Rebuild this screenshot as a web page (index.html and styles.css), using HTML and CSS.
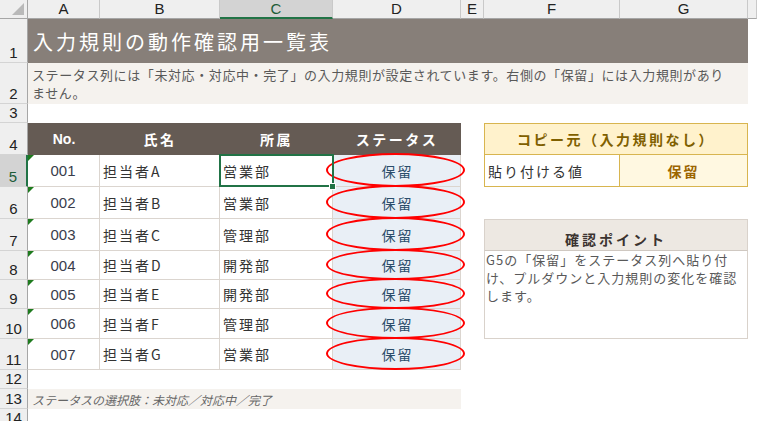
FILE: index.html
```html
<!DOCTYPE html>
<html>
    <head>
        <meta http-equiv="Content-Type" content="text/html; charset=utf-8"/>
        <link rel="stylesheet" href="styles.css">
    </head>
    <body>
        <div class='sheet'>
            <!-- column headers -->
            <div class='corner'><span class='corner_tri'></span></div>
            <div class='col_head'>A</div>
            <div class='col_head'>B</div>
            <div class='col_head col_head_sel'>C</div>
            <div class='col_head'>D</div>
            <div class='col_head'>E</div>
            <div class='col_head'>F</div>
            <div class='col_head'>G</div>
            <div class='col_head'></div>

            <!-- row 1 -->
            <div class='row_head'>1</div>
            <div class='title span7'>入力規則の動作確認用一覧表</div>
            <div class='blank'></div>

            <!-- row 2 -->
            <div class='row_head'>2</div>
            <div class='note span7'>ステータス列には「未対応・対応中・完了」の入力規則が設定されています。右側の「保留」には入力規則があり<br>ません。</div>
            <div class='blank'></div>

            <!-- row 3 -->
            <div class='row_head'>3</div>
            <div class='blank span8'></div>

            <!-- row 4 -->
            <div class='row_head'>4</div>
            <div class='th th_no'>No.</div>
            <div class='th'>氏名</div>
            <div class='th'>所属</div>
            <div class='th'>ステータス</div>
            <div class='blank'></div>
            <div class='copy_head span2'>コピー元（入力規則なし）</div>
            <div class='blank'></div>

            <!-- row 5 -->
            <div class='row_head row_head_sel'>5</div>
            <div class='td td_no'>001</div>
            <div class='td td_name'>担当者A</div>
            <div class='td td_dept td_sel'>営業部</div>
            <div class='td td_status'>保留<span class='circle'></span></div>
            <div class='blank'></div>
            <div class='copy_label'>貼り付ける値</div>
            <div class='copy_value'>保留</div>
            <div class='blank'></div>

            <!-- row 6 -->
            <div class='row_head'>6</div>
            <div class='td td_no'>002</div>
            <div class='td td_name'>担当者B</div>
            <div class='td td_dept'>営業部</div>
            <div class='td td_status'>保留<span class='circle'></span></div>
            <div class='blank'></div>
            <div class='blank span3'></div>

            <!-- row 7 -->
            <div class='row_head'>7</div>
            <div class='td td_no'>003</div>
            <div class='td td_name'>担当者C</div>
            <div class='td td_dept'>管理部</div>
            <div class='td td_status'>保留<span class='circle'></span></div>
            <div class='blank'></div>
            <div class='check_head span2'>確認ポイント</div>
            <div class='blank'></div>

            <!-- row 8 -->
            <div class='row_head'>8</div>
            <div class='td td_no'>004</div>
            <div class='td td_name'>担当者D</div>
            <div class='td td_dept'>開発部</div>
            <div class='td td_status'>保留<span class='circle'></span></div>
            <div class='blank'></div>
            <div class='check_body span2'>G5の「保留」をステータス列へ貼り付<br>け、プルダウンと入力規則の変化を確認<br>します。</div>
            <div class='blank'></div>

            <!-- row 9 -->
            <div class='row_head'>9</div>
            <div class='td td_no'>005</div>
            <div class='td td_name'>担当者E</div>
            <div class='td td_dept'>開発部</div>
            <div class='td td_status'>保留<span class='circle'></span></div>
            <div class='blank'></div>
            <div class='blank'></div>

            <!-- row 10 -->
            <div class='row_head'>10</div>
            <div class='td td_no'>006</div>
            <div class='td td_name'>担当者F</div>
            <div class='td td_dept'>管理部</div>
            <div class='td td_status'>保留<span class='circle'></span></div>
            <div class='blank'></div>
            <div class='blank'></div>

            <!-- row 11 -->
            <div class='row_head'>11</div>
            <div class='td td_no'>007</div>
            <div class='td td_name'>担当者G</div>
            <div class='td td_dept'>営業部</div>
            <div class='td td_status'>保留<span class='circle'></span></div>
            <div class='blank span4'></div>

            <!-- row 12 -->
            <div class='row_head'>12</div>
            <div class='blank span8'></div>

            <!-- row 13 -->
            <div class='row_head'>13</div>
            <div class='foot span4'>ステータスの選択肢：未対応／対応中／完了</div>
            <div class='blank span4'></div>

            <!-- row 14 -->
            <div class='row_head'>14</div>
            <div class='blank span8'></div>
        </div>
    </body>
</html>
```

FILE: styles.css
```css
html, body
{
    margin: 0;
    padding: 0;
    background: #fff;
    overflow: hidden;
}
.sheet
{
    display: grid;
    grid-template-columns: 28px 72px 120px 113px 128px 23px 136px 128px 1fr;
    grid-template-rows: 19px 44px 41px 19px 32px 32px 32px 32px 29px 29px 30px 31px 19px 20px 19px;
    width: 757px;
    height: 421px;
    overflow: hidden;
    font-family: "Noto Sans CJK JP", "Liberation Sans", sans-serif;
    color: #333;
}
.sheet > div
{
    box-sizing: border-box;
    min-width: 0;
}
.span2 { grid-column: span 2; }
.span3 { grid-column: span 3; }
.span4 { grid-column: span 4; }
.span7 { grid-column: span 7; }
.span8 { grid-column: span 8; }

/* excel chrome */
.corner
{
    position: relative;
    background: #efefef;
    border-right: 1px solid #a6a6a6;
    border-bottom: 1px solid #a6a6a6;
}
.corner_tri
{
    position: absolute;
    right: 3px;
    bottom: 3px;
    width: 0;
    height: 0;
    border-left: 12px solid transparent;
    border-bottom: 12px solid #b9b9b9;
}
.col_head
{
    background: #efefef;
    border-right: 1px solid #c9c9c9;
    border-bottom: 1px solid #a6a6a6;
    font-family: "Liberation Sans", Arial, sans-serif;
    font-size: 15px;
    line-height: 18px;
    text-align: center;
    color: #222;
}
.col_head_sel
{
    background: #d3d3d3;
    border-bottom: 2px solid #217346;
    color: #1d5c38;
}
.row_head
{
    display: flex;
    align-items: flex-end;
    justify-content: center;
    background: #efefef;
    border-right: 1px solid #a6a6a6;
    border-bottom: 1px solid #d4d4d4;
    font-family: "Liberation Sans", Arial, sans-serif;
    font-size: 15px;
    line-height: 16px;
    color: #222;
    padding-bottom: 1px;
}
.row_head_sel
{
    background: #d3d3d3;
    border-right: 2px solid #217346;
    color: #1d5c38;
}

/* banner rows */
.title
{
    display: flex;
    align-items: center;
    padding-left: 5px;
    padding-top: 1px;
    background: #877f79;
    color: #fff;
    font-size: 20px;
    letter-spacing: 3px;
    white-space: nowrap;
}
.note
{
    background: #f5f2ee;
    color: #595959;
    font-size: 13px;
    line-height: 18px;
    letter-spacing: 0.6px;
    padding: 3px 0 0 4px;
    white-space: nowrap;
}
.foot
{
    display: flex;
    align-items: center;
    background: #f5f2ee;
    color: #666;
    font-size: 12px;
    font-style: italic;
    padding-left: 4px;
    white-space: nowrap;
}

/* list table */
.th
{
    display: flex;
    align-items: center;
    justify-content: center;
    background: #655b54;
    color: #fff;
    font-size: 14px;
    font-weight: bold;
    letter-spacing: 2.5px;
}
.th_no
{
    font-family: "Liberation Sans", Arial, sans-serif;
    letter-spacing: 0;
}
.td
{
    position: relative;
    display: flex;
    align-items: center;
    border-right: 1px solid #dbd5cf;
    border-bottom: 1px solid #dbd5cf;
    font-size: 14px;
    letter-spacing: 2px;
    white-space: nowrap;
}
.td_no
{
    justify-content: center;
    font-family: "Liberation Sans", Arial, sans-serif;
    font-size: 15px;
    letter-spacing: 0;
    color: #3a3d4c;
    padding-right: 1px;
}
.td_no::before/*number stored as text marker*/
{
    content: '';
    position: absolute;
    top: 0;
    left: 0;
    border-top: 6px solid #1e7b1e;
    border-right: 6px solid transparent;
}
.td_name, .td_dept
{
    padding-left: 3px;
}
.td_sel::after
{
    content: '';
    position: absolute;
    left: -1px;
    top: -1px;
    right: -2px;
    bottom: -1px;
    border: 2px solid #217346;
    z-index: 3;
}
.td_sel::before/*fill handle*/
{
    content: '';
    position: absolute;
    right: -4px;
    bottom: -4px;
    width: 5px;
    height: 5px;
    background: #217346;
    border: 1px solid #fff;
    z-index: 4;
}
.td_status
{
    justify-content: center;
    background: #e9eff6;
    color: #2b4d6b;
    padding-left: 2px;
}
.circle
{
    position: absolute;
    left: -7px;
    right: -5px;
    top: -2px;
    bottom: -1px;
    border: 2px solid #ff0000;
    border-radius: 50%;
    z-index: 2;
}

/* copy source box */
.copy_head
{
    display: flex;
    align-items: center;
    justify-content: center;
    background: #fff2cc;
    border: 1px solid #d8b54f;
    color: #7f6000;
    font-size: 14px;
    font-weight: bold;
    letter-spacing: 2.5px;
    white-space: nowrap;
}
.copy_label
{
    display: flex;
    align-items: center;
    padding-left: 3px;
    border-left: 1px solid #d8b54f;
    border-right: 1px solid #d8b54f;
    border-bottom: 1px solid #d8b54f;
    font-size: 14px;
    letter-spacing: 2px;
}
.copy_value
{
    display: flex;
    align-items: center;
    justify-content: center;
    background: #fff8e1;
    border-right: 1px solid #d8b54f;
    border-bottom: 1px solid #d8b54f;
    color: #9c6500;
    font-size: 14px;
    font-weight: bold;
    letter-spacing: 2px;
}

/* check point box */
.check_head
{
    display: flex;
    align-items: flex-end;
    justify-content: center;
    padding-bottom: 1px;
    background: #ede8e2;
    border: 1px solid #d9d2cb;
    border-bottom: 1px solid #cfc8c1;
    color: #3b3330;
    font-size: 14px;
    font-weight: bold;
    letter-spacing: 3px;
}
.check_body
{
    grid-row: span 3;
    border-left: 1px solid #d9d2cb;
    border-right: 1px solid #d9d2cb;
    border-bottom: 1px solid #d9d2cb;
    padding: 0 0 0 1px;
    color: #595959;
    font-size: 13px;
    line-height: 18px;
    letter-spacing: 1px;
    white-space: nowrap;
}
```
